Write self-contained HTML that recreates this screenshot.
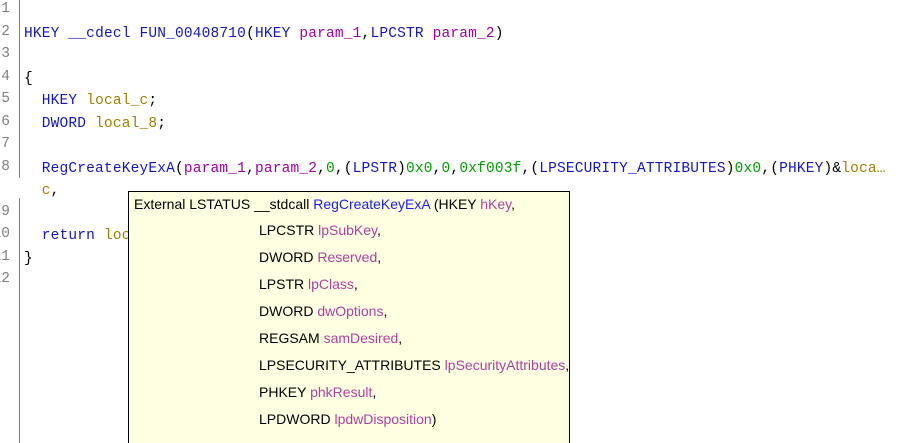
<!DOCTYPE html>
<html><head><meta charset="utf-8"><style>
html,body{margin:0;padding:0;background:#fff;width:924px;height:443px;overflow:hidden;position:relative}
.ln{position:absolute;left:0;width:10px;text-align:right;font:14.5px "Liberation Mono",monospace;color:#808080;white-space:nowrap;overflow:visible;direction:rtl}
.code{position:absolute;left:24px;font:14.5px "Liberation Mono",monospace;letter-spacing:0.18px;white-space:pre;color:#000}
.t{color:#1515c8}.p{color:#a000a0}.l{color:#a08000}.n{color:#00a000}.f{color:#1515c8}
.div{position:absolute;left:19px;width:1px;background:#808080}
.tip{position:absolute;left:128px;top:191px;width:440px;height:260px;background:#ffffe1;border:1px solid #000;font:14px "Liberation Sans",sans-serif;color:#000}
.tip div{position:absolute;white-space:pre}
.b{color:#1a1aff}.q{color:#b040a0}
</style></head><body>
<div class="div" style="top:0;height:178px"></div>
<div class="div" style="top:198px;height:245px"></div>
<div class="ln" style="top:1px">1</div>
<div class="ln" style="top:24px">2</div>
<div class="ln" style="top:46px">3</div>
<div class="ln" style="top:69px">4</div>
<div class="ln" style="top:91px">5</div>
<div class="ln" style="top:114px">6</div>
<div class="ln" style="top:136px">7</div>
<div class="ln" style="top:159px">8</div>
<div class="ln" style="top:204px">9</div>
<div class="ln" style="top:226px">10</div>
<div class="ln" style="top:249px">11</div>
<div class="ln" style="top:271px">12</div>
<div class="code" style="top:26px"><span class="t">HKEY</span> <span class="t">__cdecl</span> <span class="f">FUN_00408710</span>(<span class="t">HKEY</span> <span class="p">param_1</span>,<span class="t">LPCSTR</span> <span class="p">param_2</span>)</div>
<div class="code" style="top:71px">{</div>
<div class="code" style="top:93px">  <span class="t">HKEY</span> <span class="l">local_c</span>;</div>
<div class="code" style="top:116px">  <span class="t">DWORD</span> <span class="l">local_8</span>;</div>
<div class="code" style="top:161px">  <span class="f">RegCreateKeyExA</span>(<span class="p">param_1</span>,<span class="p">param_2</span>,<span class="n">0</span>,(<span class="t">LPSTR</span>)<span class="n">0x0</span>,<span class="n">0</span>,<span class="n">0xf003f</span>,(<span class="t">LPSECURITY_ATTRIBUTES</span>)<span class="n">0x0</span>,(<span class="t">PHKEY</span>)&amp;<span class="l">loca…</span></div>
<div class="code" style="top:183px">  <span class="l">c</span>,</div>
<div class="code" style="top:228px">  <span class="t">return</span> <span class="l">local_c</span>;</div>
<div class="code" style="top:251px">}</div>
<div class="tip">
<div style="left:5px;top:4px">External LSTATUS __stdcall <span class="b">RegCreateKeyExA</span> (HKEY <span class="q">hKey</span>,</div>
<div style="left:130px;top:30px">LPCSTR <span class="q">lpSubKey</span>,</div>
<div style="left:130px;top:57px">DWORD <span class="q">Reserved</span>,</div>
<div style="left:130px;top:84px">LPSTR <span class="q">lpClass</span>,</div>
<div style="left:130px;top:111px">DWORD <span class="q">dwOptions</span>,</div>
<div style="left:130px;top:138px">REGSAM <span class="q">samDesired</span>,</div>
<div style="left:130px;top:165px">LPSECURITY_ATTRIBUTES <span class="q">lpSecurityAttributes</span>,</div>
<div style="left:130px;top:192px">PHKEY <span class="q">phkResult</span>,</div>
<div style="left:130px;top:219px">LPDWORD <span class="q">lpdwDisposition</span>)</div>
</div>
</body></html>
